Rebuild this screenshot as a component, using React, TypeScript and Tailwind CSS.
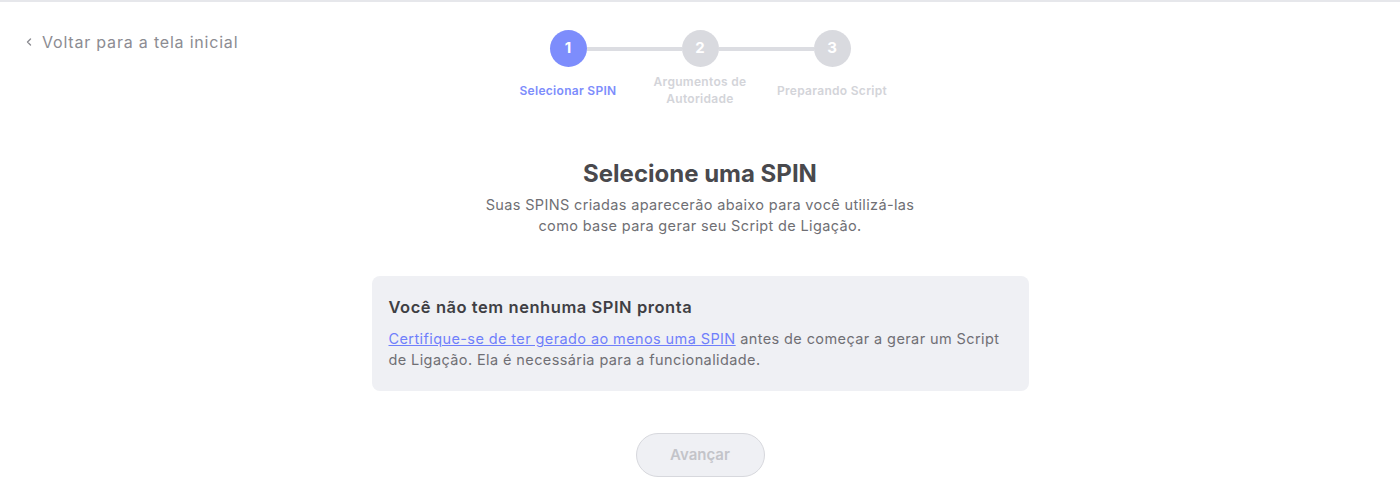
import React from 'react';

const steps = [
  { n: 1, label: ['Selecionar SPIN'], active: true },
  { n: 2, label: ['Argumentos de', 'Autoridade'], active: false },
  { n: 3, label: ['Preparando Script'], active: false },
];

const Stepper: React.FC = () => (
  <div className="flex">
    {steps.map((s, i) => (
      <div key={s.n} className="flex w-[132px] flex-col items-center">
        <div className="flex w-full items-center">
          <div className={`h-1 flex-1 ${i === 0 ? 'bg-transparent' : 'bg-[#dcdde2]'}`} />
          <div
            className={`flex h-[37px] w-[37px] items-center justify-center rounded-full text-[15px] font-bold text-white ${
              s.active ? 'bg-[#7d8dfc]' : 'bg-[#d9dadf]'
            }`}
          >
            {s.n}
          </div>
          <div className={`h-1 flex-1 ${i === steps.length - 1 ? 'bg-transparent' : 'bg-[#dcdde2]'}`} />
        </div>
        <div
          className={`mt-[5px] flex h-[36px] flex-col items-center justify-center text-center text-[12px] leading-[17px] font-semibold tracking-[0.3px] ${
            s.active ? 'text-[#7d8dfc]' : 'text-[#d3d4d9]'
          }`}
        >
          {s.label.map((l) => (
            <span key={l}>{l}</span>
          ))}
        </div>
      </div>
    ))}
  </div>
);

const App: React.FC = () => {
  return (
    <div
      className="min-h-[488px] w-full border-t-2 border-[#e6e7eb] bg-white"
      style={{ fontFamily: 'Inter, "Noto Sans", sans-serif' }}
    >
      <div className="grid grid-cols-[1fr_auto_1fr] pt-[28px]">
        <div className="pl-[24px]">
          <a href="#" className="flex items-center gap-[8px] pt-[1px] text-[16px] tracking-[0.8px] text-[#8c8c92]">
            <svg width="10" height="10" viewBox="0 0 10 10" fill="none" stroke="currentColor" strokeWidth="1.4" strokeLinecap="round" strokeLinejoin="round">
              <path d="M6.5 2 L3.5 5 L6.5 8" />
            </svg>
            <span className="leading-[22px]">Voltar para a tela inicial</span>
          </a>
        </div>
        <Stepper />
        <div />
      </div>

      <div className="mt-[50px] flex flex-col items-center">
        <h1 className="text-[24px] leading-[32px] font-bold text-[#49494d]">Selecione uma SPIN</h1>
        <p className="mt-[4px] text-center text-[14.5px] leading-[21px] tracking-[0.35px] text-[#6f6f74]">
          Suas SPINS criadas aparecerão abaixo para você utilizá-las
          <br />
          como base para gerar seu Script de Ligação.
        </p>

        <div className="mt-[40px] w-[657px] rounded-[8px] bg-[#eff0f4] px-[17px] pt-[20px] pb-[21px]">
          <h2 className="text-[16.5px] leading-[22px] font-semibold tracking-[0.55px] text-[#3f3f44]">
            Você não tem nenhuma SPIN pronta
          </h2>
          <p className="mt-[10px] text-[14.5px] leading-[21px] tracking-[0.4px] text-[#6f6f74]">
            <a href="#" className="text-[#6f7ffb] underline">Certifique-se de ter gerado ao menos uma SPIN</a> antes de começar a gerar um Script
            <br />
            de Ligação. Ela é necessária para a funcionalidade.
          </p>
        </div>

        <button
          type="button"
          disabled
          className="mt-[42px] h-[44px] w-[129px] rounded-full border border-[#d7d8dd] bg-[#eff0f4] text-[15px] font-semibold text-[#c3c4c9]"
        >
          Avançar
        </button>
      </div>
    </div>
  );
};

export default App;
